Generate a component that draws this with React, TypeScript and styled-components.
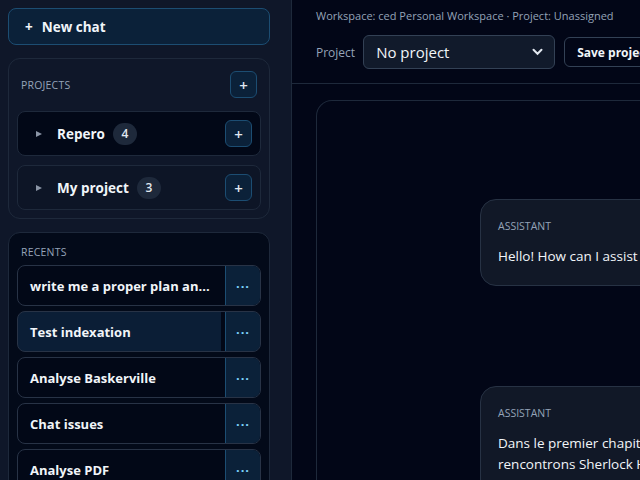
import React from 'react'
import styled, { createGlobalStyle } from 'styled-components'

const GlobalStyle = createGlobalStyle`
  html, body {
    margin: 0;
    padding: 0;
    background: #020617;
    overflow: hidden;
  }
  * { box-sizing: border-box; }
  body {
    font-family: "Open Sans", "Noto Sans", sans-serif;
    color: #e2e8f0;
  }
`

const Shell = styled.div`
  display: flex;
  width: 640px;
  height: 480px;
  overflow: hidden;
`

const Sidebar = styled.aside`
  flex: 0 0 292px;
  width: 292px;
  min-width: 0;
  overflow: hidden;
  background: #0f1729;
  border-right: 1px solid #1e293b;
  padding: 8px 21px 8px 8px;
  display: flex;
  flex-direction: column;
  gap: 13px;

  & > * {
    flex-shrink: 0;
  }
`

const NewChatButton = styled.button`
  height: 37px;
  display: flex;
  align-items: center;
  gap: 9px;
  padding: 0 16px;
  background: #0b2139;
  border: 1px solid #1c4d72;
  border-radius: 8px;
  color: #f1f5f9;
  font: 700 13.5px "Open Sans", sans-serif;
  text-align: left;
`

const Panel = styled.section<{ $dark?: boolean }>`
  border: 1px solid #1e293b;
  border-radius: 12px;
  background: ${p => (p.$dark ? '#030a19' : '#0f1729')};
  padding: 12px 8px 8px;
  display: flex;
  flex-direction: column;
  min-width: 0;
`

const PanelHeader = styled.div<{ $gap: number }>`
  display: flex;
  align-items: center;
  justify-content: space-between;
  padding: 0 4px;
  margin-bottom: ${p => p.$gap}px;
`

const PanelLabel = styled.span`
  font-size: 10.5px;
  letter-spacing: 0.2px;
  color: #94a3b8;
  text-transform: uppercase;
`

const IconButton = styled.button`
  width: 27px;
  height: 27px;
  flex-shrink: 0;
  padding: 0;
  display: flex;
  align-items: center;
  justify-content: center;
  background: #0b2139;
  border: 1px solid #1c4d72;
  border-radius: 6px;
  color: #e2e8f0;
  font: 600 15px "Open Sans", sans-serif;
`

const ProjectList = styled.div`
  display: flex;
  flex-direction: column;
  gap: 9px;
`

const ProjectRow = styled.div<{ $active?: boolean }>`
  height: 45px;
  display: flex;
  align-items: center;
  padding: 0 8px 0 18px;
  border: 1px solid #1e293b;
  border-radius: 8px;
  background: ${p => (p.$active ? '#020817' : '#0d1526')};
`

const Caret = styled.span`
  width: 0;
  height: 0;
  border-top: 3.5px solid transparent;
  border-bottom: 3.5px solid transparent;
  border-left: 6px solid #8b95a6;
  margin-right: 15px;
`

const ProjectName = styled.span`
  font-weight: 700;
  font-size: 13.5px;
  color: #f1f5f9;
`

const CountBadge = styled.span`
  margin-left: 8px;
  min-width: 24px;
  height: 22px;
  padding: 0 8px;
  border-radius: 11px;
  background: #1e293b;
  color: #e2e8f0;
  font-size: 12px;
  font-weight: 600;
  display: flex;
  align-items: center;
  justify-content: center;
`

const Spacer = styled.span`
  flex: 1;
`

const RecentList = styled.div`
  display: flex;
  flex-direction: column;
  gap: 5px;
`

const RecentItem = styled.div<{ $active?: boolean }>`
  height: 41px;
  flex-shrink: 0;
  display: flex;
  border: 1px solid #283346;
  border-radius: 8px;
  overflow: hidden;
  background: ${p => (p.$active ? '#0b1e36' : '#020817')};
`

const RecentTitle = styled.div<{ $active?: boolean }>`
  flex: 1;
  min-width: 0;
  overflow: hidden;
  display: flex;
  align-items: center;
  padding: 0 12px;
  font-weight: 700;
  font-size: 13px;
  color: #f1f5f9;
  white-space: nowrap;
  border-right: ${p => (p.$active ? '4px solid #020817' : 'none')};
`

const MenuButton = styled.button`
  flex: 0 0 35px;
  border: none;
  border-left: 1px solid #1c4d72;
  background: #0b2139;
  color: #7dd3fc;
  font: 700 13px "Open Sans", sans-serif;
  letter-spacing: 1px;
  padding: 0;
`

const Main = styled.main`
  flex: 1;
  min-width: 0;
  overflow: hidden;
  display: flex;
  flex-direction: column;
`

const TopBar = styled.header`
  flex: 0 0 84px;
  padding: 8px 24px 0;
  border-bottom: 1px solid #1e293b;
  display: flex;
  flex-direction: column;
  gap: 12px;
`

const Breadcrumb = styled.div`
  font-size: 11px;
  color: #94a3b8;
  white-space: nowrap;
`

const ProjectBar = styled.div`
  display: flex;
  align-items: center;
  gap: 8px;
  white-space: nowrap;
`

const FieldLabel = styled.label`
  font-size: 12px;
  color: #94a3b8;
`

const Select = styled.div`
  flex: 0 0 192px;
  height: 34px;
  padding: 0 11px 0 12px;
  display: flex;
  align-items: center;
  justify-content: space-between;
  background: #111a2b;
  border: 1px solid #334155;
  border-radius: 6px;
  font-size: 15px;
  color: #f1f5f9;
`

const OutlineButton = styled.button`
  flex: 0 0 auto;
  margin-left: 1px;
  height: 30px;
  padding: 0 12px;
  background: transparent;
  border: 1px solid #334155;
  border-radius: 6px;
  color: #f1f5f9;
  font: 700 12px "Open Sans", sans-serif;
`

const ChatPanel = styled.section`
  margin: 16px 0 0 24px;
  width: 700px;
  flex: 1 0 auto;
  border: 1px solid #1e293b;
  border-bottom: none;
  border-radius: 16px 16px 0 0;
  padding: 98px 0 0 163px;
  display: flex;
  flex-direction: column;
  gap: 100px;
`

const Bubble = styled.article`
  width: 330px;
  padding: 19px 17px 18px;
  background: #111827;
  border: 1px solid #273244;
  border-radius: 16px;
`

const Role = styled.div`
  font-size: 10.5px;
  color: #94a3b8;
  margin-bottom: 13px;
`

const MessageText = styled.p`
  margin: 0;
  font-size: 13.5px;
  line-height: 21px;
  color: #f1f5f9;
`

const recents = [
  'write me a proper plan an...',
  'Test indexation',
  'Analyse Baskerville',
  'Chat issues',
  'Analyse PDF',
]

const Chevron = () => (
  <svg width="11" height="8" viewBox="0 0 11 8">
    <path d="M1.5 1.8 5.5 5.8 9.5 1.8" fill="none" stroke="#e2e8f0" strokeWidth="2" strokeLinecap="round" />
  </svg>
)

export default function App() {
  return (
    <>
      <GlobalStyle />
      <Shell>
        <Sidebar>
          <NewChatButton>
            <span>+</span>
            New chat
          </NewChatButton>

          <Panel>
            <PanelHeader $gap={13}>
              <PanelLabel>Projects</PanelLabel>
              <IconButton>+</IconButton>
            </PanelHeader>
            <ProjectList>
              <ProjectRow $active>
                <Caret />
                <ProjectName>Repero</ProjectName>
                <CountBadge>4</CountBadge>
                <Spacer />
                <IconButton>+</IconButton>
              </ProjectRow>
              <ProjectRow>
                <Caret />
                <ProjectName>My project</ProjectName>
                <CountBadge>3</CountBadge>
                <Spacer />
                <IconButton>+</IconButton>
              </ProjectRow>
            </ProjectList>
          </Panel>

          <Panel $dark>
            <PanelHeader $gap={6}>
              <PanelLabel>Recents</PanelLabel>
            </PanelHeader>
            <RecentList>
              {recents.map((title, i) => (
                <RecentItem key={title} $active={i === 1}>
                  <RecentTitle $active={i === 1}>{title}</RecentTitle>
                  <MenuButton>···</MenuButton>
                </RecentItem>
              ))}
            </RecentList>
          </Panel>
        </Sidebar>

        <Main>
          <TopBar>
            <Breadcrumb>Workspace: ced Personal Workspace · Project: Unassigned</Breadcrumb>
            <ProjectBar>
              <FieldLabel>Project</FieldLabel>
              <Select>
                No project
                <Chevron />
              </Select>
              <OutlineButton>Save project</OutlineButton>
            </ProjectBar>
          </TopBar>

          <ChatPanel>
            <Bubble>
              <Role>ASSISTANT</Role>
              <MessageText>Hello! How can I assist you today?</MessageText>
            </Bubble>
            <Bubble>
              <Role>ASSISTANT</Role>
              <MessageText>
                Dans le premier chapitre du roman, nous rencontrons Sherlock Holmes et le
                docteur Watson, l'ami fidèle qui raconte l'enquête.
              </MessageText>
            </Bubble>
          </ChatPanel>
        </Main>
      </Shell>
    </>
  )
}
